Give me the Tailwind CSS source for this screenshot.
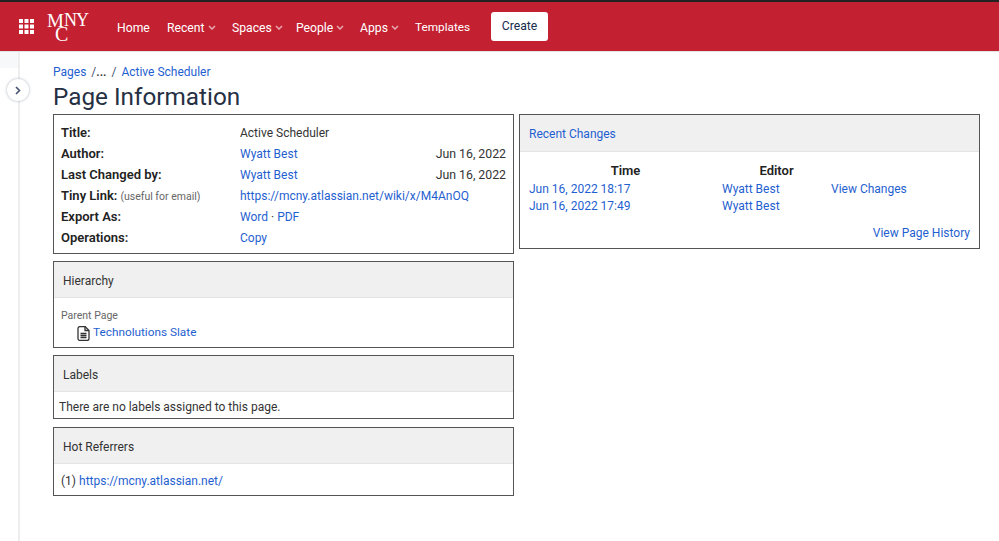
<!DOCTYPE html>
<html lang="en">
<head>
<meta charset="UTF-8">
<title>Page Information</title>
<script src="https://cdn.jsdelivr.net/npm/@tailwindcss/browser@4"></script>
</head>
<body class="font-['Roboto',sans-serif] text-[12px] text-[#333] bg-white">
<div class="w-[999px] h-[541px] overflow-hidden flex flex-col">
  <!-- Header -->
  <header class="h-[52px] shrink-0 bg-[#c32032] border-t-2 border-[#222] border-b border-b-[#e4e4e4] flex items-center text-[#fff] text-[12.2px]">
    <svg class="ml-[19px] w-[15px] h-[15px]" viewBox="0 0 15 15" fill="#fff">
      <rect x="0" y="0" width="4" height="4"/><rect x="5.5" y="0" width="4" height="4"/><rect x="11" y="0" width="4" height="4"/>
      <rect x="0" y="5.5" width="4" height="4"/><rect x="5.5" y="5.5" width="4" height="4"/><rect x="11" y="5.5" width="4" height="4"/>
      <rect x="0" y="11" width="4" height="4"/><rect x="5.5" y="11" width="4" height="4"/><rect x="11" y="11" width="4" height="4"/>
    </svg>
    <div class="relative ml-[13px] w-[43px] h-[34px] font-['Liberation_Serif',serif] leading-none">
      <span class="absolute left-0 top-[1px] text-[19px]">M</span>
      <span class="absolute left-[8px] top-[14px] text-[20px]">C</span>
      <span class="absolute left-[17px] top-[1px] text-[18px] tracking-[-1px]">NY</span>
    </div>
    <nav class="ml-[27px] mt-[3px] flex items-center">
      <a class="w-[50px]">Home</a>
      <a class="w-[65px] flex items-center gap-[3px]">Recent<svg class="w-[8px] h-[5px]" viewBox="0 0 8 5" fill="none" stroke="#e8aab1" stroke-width="1.5"><path d="M1 1l3 3 3-3"/></svg></a>
      <a class="w-[64px] flex items-center gap-[3px]">Spaces<svg class="w-[8px] h-[5px]" viewBox="0 0 8 5" fill="none" stroke="#e8aab1" stroke-width="1.5"><path d="M1 1l3 3 3-3"/></svg></a>
      <a class="w-[64px] flex items-center gap-[3px]">People<svg class="w-[8px] h-[5px]" viewBox="0 0 8 5" fill="none" stroke="#e8aab1" stroke-width="1.5"><path d="M1 1l3 3 3-3"/></svg></a>
      <a class="w-[55px] flex items-center gap-[3px]">Apps<svg class="w-[8px] h-[5px]" viewBox="0 0 8 5" fill="none" stroke="#e8aab1" stroke-width="1.5"><path d="M1 1l3 3 3-3"/></svg></a>
      <a class="w-[76px] text-[11.8px]">Templates</a>
    </nav>
    <button class="w-[57px] h-[29px] bg-white rounded-[3px] text-[#172b4d] text-[12.2px]">Create</button>
  </header>

  <div class="flex-1 flex min-h-0">
    <!-- Sidebar rail -->
    <div class="relative w-[20px] shrink-0 border-r-2 border-[#eeeeee]">
      <div class="h-[16px] bg-[#f7f8fa]"></div>
      <button class="absolute left-[7px] top-[27px] w-[22px] h-[22px] rounded-full bg-white shadow-[0_0_3px_rgba(9,30,66,0.35)] flex items-center justify-center">
        <svg class="w-[6px] h-[9px]" viewBox="0 0 6 9" fill="none" stroke="#44546f" stroke-width="1.6"><path d="M1 1l3.5 3.5L1 8"/></svg>
      </button>
    </div>

    <!-- Main -->
    <main class="pl-[33px] flex-1 min-w-0">
      <div class="mt-[12px] h-[16px] leading-[16px] text-[#1f5fd0] text-[12px]">Pages <span class="text-[#44546f] ml-[2px]">/</span><span class="text-[#333] font-semibold">...</span> <span class="text-[#44546f] mx-[2px]">/</span> Active Scheduler</div>
      <h1 class="mt-[3px] h-[28px] leading-[28px] text-[24.3px] text-[#253044] font-normal">Page Information</h1>

      <div class="mt-[3px] flex items-start gap-[5px]">
        <!-- Left column -->
        <div class="w-[461px] flex flex-col gap-[7px]">
          <section class="h-[140px] border border-[#555] px-[7px] pt-[7px]">
            <div class="h-[21px] leading-[21px] flex items-baseline"><b class="w-[179px] text-[13px] font-semibold text-[#222]">Title:</b><span>Active Scheduler</span></div>
            <div class="h-[21px] leading-[21px] flex items-baseline"><b class="w-[179px] text-[13px] font-semibold text-[#222]">Author:</b><a class="text-[#1f5fd0]">Wyatt Best</a><span class="ml-auto text-[12.3px]">Jun 16, 2022</span></div>
            <div class="h-[21px] leading-[21px] flex items-baseline"><b class="w-[179px] text-[13px] font-semibold text-[#222]">Last Changed by:</b><a class="text-[#1f5fd0]">Wyatt Best</a><span class="ml-auto text-[12.3px]">Jun 16, 2022</span></div>
            <div class="h-[21px] leading-[21px] flex items-baseline"><div class="w-[179px]"><b class="text-[13px] font-semibold text-[#222]">Tiny Link:</b> <span class="text-[10.5px] text-[#666]">(useful for email)</span></div><a class="text-[#1f5fd0]">https://mcny.atlassian.net/wiki/x/M4AnOQ</a></div>
            <div class="h-[21px] leading-[21px] flex items-baseline"><b class="w-[179px] text-[13px] font-semibold text-[#222]">Export As:</b><span class="text-[#1f5fd0]">Word <span class="text-[#333]">·</span> PDF</span></div>
            <div class="h-[21px] leading-[21px] flex items-baseline"><b class="w-[179px] text-[13px] font-semibold text-[#222]">Operations:</b><a class="text-[#1f5fd0]">Copy</a></div>
          </section>

          <section class="h-[87px] border border-[#555]">
            <div class="h-[36px] leading-[38px] px-[9px] bg-[#f0f0f0] border-b border-[#e4e4e4]">Hierarchy</div>
            <div class="pl-[7px] pt-[11px]">
              <div class="h-[14px] leading-[14px] text-[10.5px] text-[#666]">Parent Page</div>
              <div class="mt-[1px] h-[18px] flex items-center pl-[16px] gap-[3px]">
                <svg class="w-[13px] h-[15px]" viewBox="0 0 13 15" fill="none" stroke="#333" stroke-width="1.3"><path d="M1 2.5a2 2 0 0 1 2-2h5l4 4v8a2 2 0 0 1-2 2H3a2 2 0 0 1-2-2z"/><path d="M3.5 7.5h6M3.5 9.5h6M3.5 11.5h6M8 .5v4h4"/></svg>
                <a class="text-[#1f5fd0] text-[11.8px]">Technolutions Slate</a>
              </div>
            </div>
          </section>

          <section class="h-[64px] border border-[#555]">
            <div class="h-[36px] leading-[38px] px-[9px] bg-[#f0f0f0] border-b border-[#e4e4e4]">Labels</div>
            <div class="pl-[5px] pt-[6px] leading-[18px]">There are no labels assigned to this page.</div>
          </section>

          <section class="h-[69px] border border-[#555] mt-[1px]">
            <div class="h-[36px] leading-[38px] px-[9px] bg-[#f0f0f0] border-b border-[#e4e4e4]">Hot Referrers</div>
            <div class="pl-[7px] pt-[8px] leading-[18px]">(1) <a class="text-[#1f5fd0]">https://mcny.atlassian.net/</a></div>
          </section>
        </div>

        <!-- Right column -->
        <section class="w-[461px] h-[135px] border border-[#555]">
          <div class="h-[37px] leading-[39px] px-[9px] bg-[#f0f0f0] border-b border-[#e4e4e4] text-[#1f5fd0]">Recent Changes</div>
          <div class="pl-[9px] pr-[9px] pt-[10px]">
            <div class="h-[18px] leading-[18px] flex text-[13px] font-semibold text-[#222]"><span class="w-[193px] text-center">Time</span><span class="w-[109px] text-center">Editor</span></div>
            <div class="h-[18px] leading-[18px] flex text-[#1f5fd0]"><span class="w-[193px]">Jun 16, 2022 18:17</span><span class="w-[109px]">Wyatt Best</span><span>View Changes</span></div>
            <div class="h-[17px] leading-[17px] flex text-[#1f5fd0]"><span class="w-[193px]">Jun 16, 2022 17:49</span><span>Wyatt Best</span></div>
            <div class="mt-[9px] h-[18px] leading-[18px] text-right text-[#1f5fd0]">View Page History</div>
          </div>
        </section>
      </div>
    </main>
  </div>
</div>
</body>
</html>
